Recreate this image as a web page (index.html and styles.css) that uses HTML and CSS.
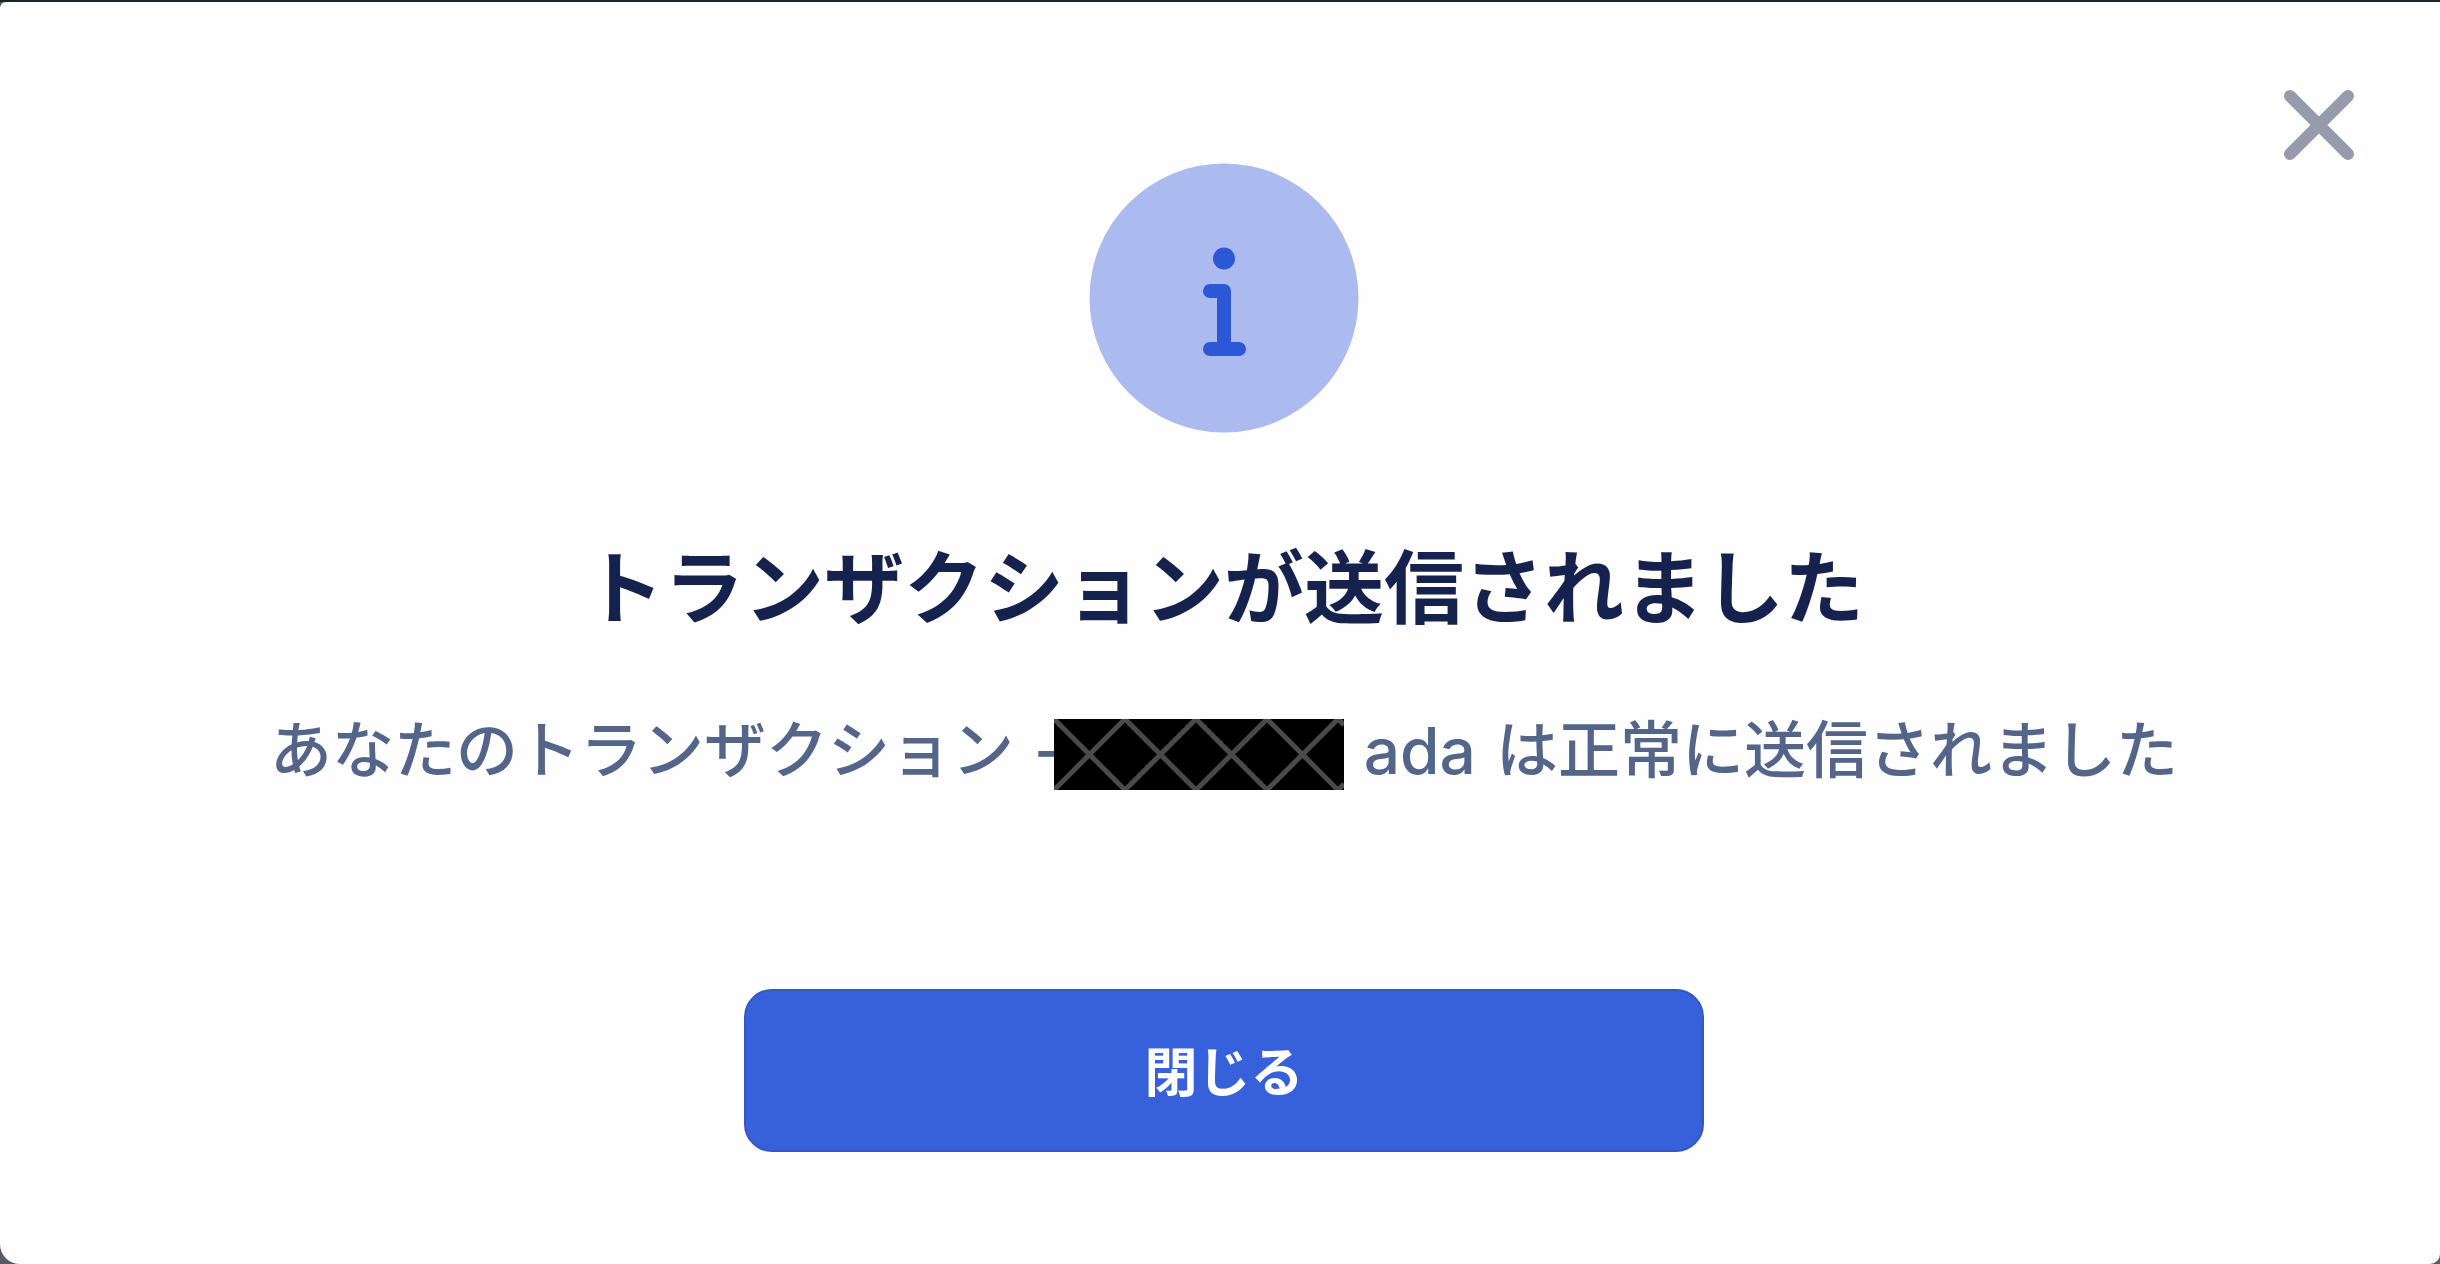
FILE: index.html
```html
<!DOCTYPE html>
<html lang="ja">
<head>
  <meta charset="UTF-8" />
  <meta name="viewport" content="width=device-width, initial-scale=1.0"/>
  <title>トランザクションが送信されました</title>
  <link rel="stylesheet" href="styles.css">
</head>
<body>
  <main class="modal" role="dialog" aria-labelledby="modalTitle">
    <button class="modal-close" type="button" aria-label="閉じる">
      <svg viewBox="0 0 72 72" aria-hidden="true">
        <path d="M7 7L65 65M65 7L7 65"/>
      </svg>
    </button>

    <svg class="info-icon" viewBox="0 0 270 270" aria-hidden="true">
      <circle class="info-bg" cx="135" cy="135" r="134.5"/>
      <circle class="info-dot" cx="135" cy="95.5" r="11"/>
      <path class="info-stem" d="M121 128H135V186M121 186H150"/>
    </svg>

    <h1 class="title" id="modalTitle">トランザクションが送信されました</h1>

    <p class="message">
      <span>あなたのトランザクション</span>
      <span class="amount">-<svg class="redacted" viewBox="0 0 290 71" aria-hidden="true">
        <path d="M0 0L71 71L142 0L213 71L284 0L290 6M0 71L71 0L142 71L213 0L284 71L290 65"/>
      </svg></span>
      <span class="currency">ada</span>
      <span>は正常に送信されました</span>
    </p>

    <button class="button" type="button">閉じる</button>
  </main>
</body>
</html>
```

FILE: styles.css
```css
:root {
  --overlay-color: #575b65;
  --title-color: #14224d;
  --text-color: #54658a;
  --accent-color: #3760db;
  --close-color: #959bab;
}

* {
  box-sizing: border-box;
}

body {
  margin: 0;
  min-height: 100vh;
  display: flex;
  border-top: 2px solid #20242a;
  background: var(--overlay-color);
  font-family: Inter, 'Noto Sans CJK JP', sans-serif;
}

.modal {
  position: relative;
  flex: 1;
  display: flex;
  flex-direction: column;
  align-items: center;
  padding: 161px 0 110px 8px;
  background: #fefefe;
  border-radius: 6px 0 10px 20px;
}

.modal-close {
  position: absolute;
  top: 87px;
  right: 85px;
  width: 72px;
  height: 72px;
  padding: 0;
  border: none;
  background: none;
  cursor: pointer;
}

.modal-close svg {
  display: block;
  fill: none;
  stroke: var(--close-color);
  stroke-width: 12;
  stroke-linecap: round;
}

.info-icon {
  width: 270px;
  height: 270px;
}

.info-bg {
  fill: #abbbef;
}

.info-dot {
  fill: #2c57d6;
}

.info-stem {
  fill: none;
  stroke: #2c57d6;
  stroke-width: 14;
  stroke-linecap: round;
  stroke-linejoin: round;
}

.title {
  margin: 107px 0 76px;
  font-size: 80px;
  font-weight: 700;
  line-height: 96px;
  color: var(--title-color);
}

.message {
  display: flex;
  align-items: center;
  gap: 20px;
  margin: 0;
  font-size: 62px;
  font-weight: 500;
  line-height: 78px;
  color: var(--text-color);
  white-space: nowrap;
}

.amount {
  display: flex;
  align-items: flex-end;
}

/* hides the sent amount */
.redacted {
  width: 290px;
  height: 71px;
  margin-left: -9px;
  background: #000;
  fill: none;
  stroke: #4a4a4a;
  stroke-width: 5;
}

.currency {
  font-size: 64px;
}

.button {
  width: 960px;
  height: 163px;
  margin-top: 199px;
  padding: 0 0 4px;
  border: 2px solid #3657c2;
  border-radius: 28px;
  background: var(--accent-color);
  color: #fff;
  font-family: inherit;
  font-size: 53px;
  font-weight: 700;
  cursor: pointer;
}
```
